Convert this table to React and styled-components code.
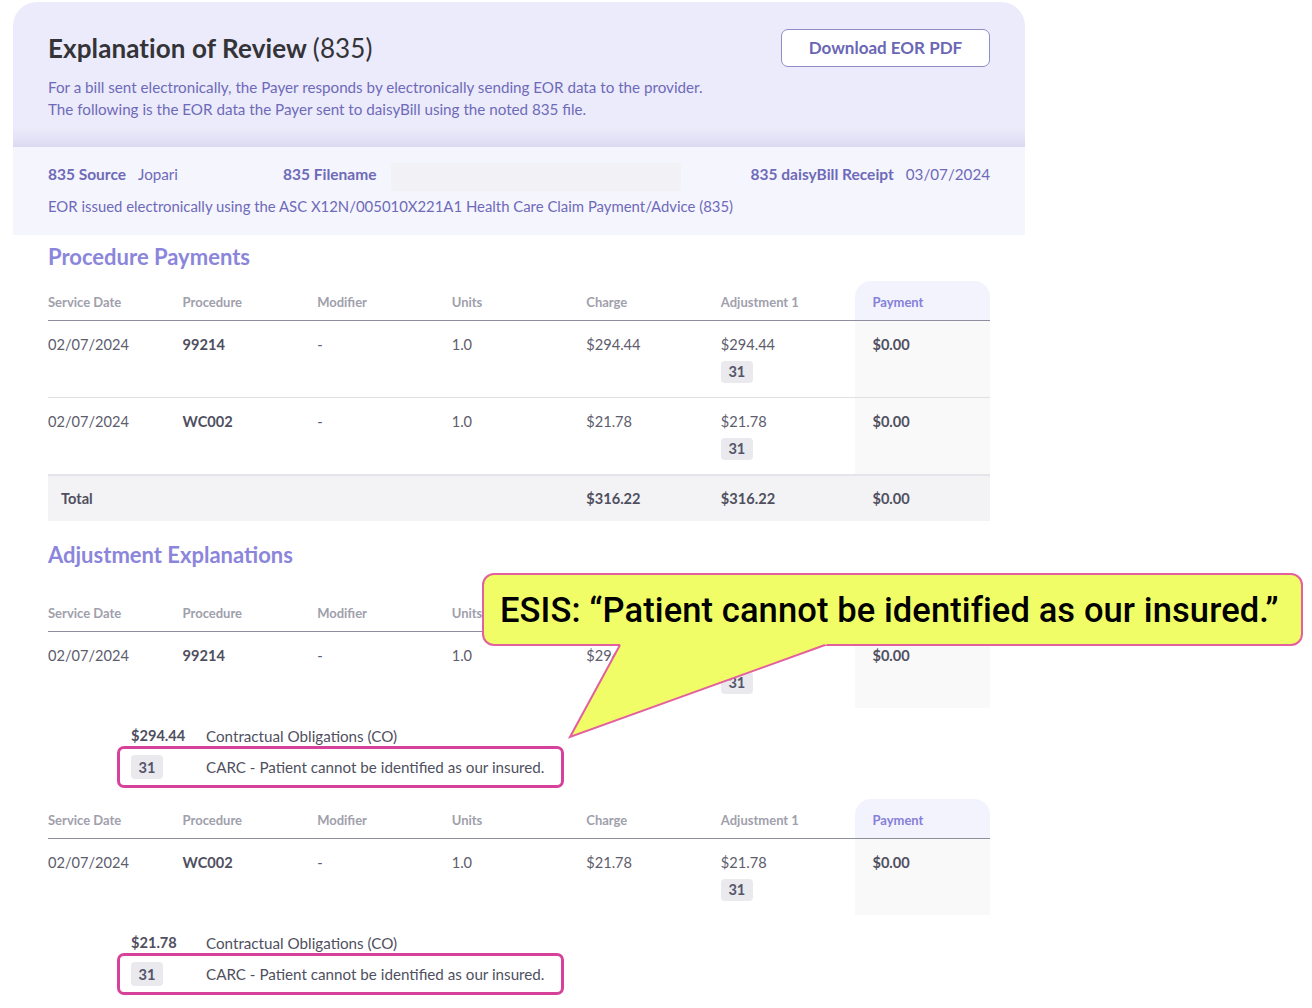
import React from 'react';
import styled, { createGlobalStyle } from 'styled-components';

const Global = createGlobalStyle`
  html, body { margin: 0; padding: 0; background: #fff; }
  body { font-family: Lato, "Noto Sans", sans-serif; color: #5b5b6b; -webkit-font-smoothing: antialiased; }
  * { box-sizing: border-box; }
`;

const Page = styled.div`
  position: relative;
  width: 1312px;
  height: 1008px;
  padding: 2px 0 0 13px;
  overflow: hidden;
  background: #fff;
`;

const Card = styled.div`
  width: 1012px;
  border-radius: 24px 24px 0 0;
  overflow: hidden;
  background: #fff;
`;

const Header = styled.header`
  height: 145px;
  padding: 26px 35px 0;
  background: linear-gradient(to bottom, #ecebfb 0, #ecebfb 126px, #e4e3f7 136px, #dad9ef 145px);
`;

const TitleRow = styled.div`
  display: flex;
  justify-content: space-between;
  align-items: center;
  height: 39px;
`;

const Title = styled.h1`
  margin: 0;
  font-size: 26px;
  font-weight: 700;
  color: #333338;
  letter-spacing: 0.1px;
  span { font-weight: 400; }
`;

const Button = styled.button`
  width: 209px;
  height: 38px;
  border: 1px solid #908cca;
  border-radius: 7px;
  background: #fff;
  color: #6b67b5;
  font-family: inherit;
  font-size: 17px;
  font-weight: 700;
  cursor: pointer;
`;

const Desc = styled.p`
  margin: 9px 0 0;
  font-size: 15.2px;
  line-height: 22px;
  color: #6e6ab8;
`;

const Meta = styled.section`
  height: 88px;
  padding: 16px 35px 0;
  background: #f5f5fe;
  color: #6e6ab8;
  font-size: 15.2px;
`;

const MetaRow = styled.div`
  display: flex;
  align-items: flex-start;
  height: 28px;
  line-height: 22px;
`;

const MetaItem = styled.div`
  display: flex;
  align-items: flex-start;
  width: ${p => p.$width || 'auto'};
  margin-left: ${p => (p.$right ? 'auto' : '0')};
`;

const MetaLabel = styled.span`
  font-weight: 700;
  font-size: 15.5px;
`;

const MetaValue = styled.span`
  margin-left: 12px;
`;

const FileBox = styled.div`
  width: 290px;
  height: 28px;
  margin-left: 15px;
  background: #f2f2f6;
  border-radius: 2px;
`;

const MetaNote = styled.div`
  margin-top: 5px;
  line-height: 20px;
  font-size: 14.9px;
`;

const Body = styled.div`
  padding: 0 35px;
`;

const SectionTitle = styled.h2`
  margin: ${p => p.$top}px 0 0;
  font-size: 22px;
  line-height: 24px;
  font-weight: 700;
  color: #8b86db;
`;

const Table = styled.div`
  margin-top: ${p => p.$top || 0}px;
  font-size: 14.6px;
`;

const Row = styled.div`
  display: grid;
  grid-template-columns: repeat(7, 1fr);
  border-top: ${p => (p.$total ? '2px solid #e4e4ea' : p.$first ? '0' : '1px solid #dfdfe4')};
  background: ${p => (p.$total ? '#f3f3f5' : 'transparent')};
`;

const HeadRow = styled(Row)`
  border-top: 0;
  border-bottom: 1px solid #8e8e9e;
`;

const HeadCell = styled.div`
  padding: 13px 0 10px ${p => (p.$pay ? '17px' : '0')};
  line-height: 16px;
  font-size: 13px;
  font-weight: 700;
  color: ${p => (p.$pay ? '#8580d8' : '#a0a0ac')};
  background: ${p => (p.$pay ? '#f3f3fe' : 'transparent')};
  border-radius: ${p => (p.$pay ? '16px 16px 0 0' : '0')};
`;

const Cell = styled.div`
  padding: ${p => (p.$total ? '13px 0 12px' : '14px 0 14px')};
  padding-left: ${p => (p.$pay ? '17px' : p.$indent ? '13px' : '0')};
  line-height: 20px;
  min-height: ${p => (p.$total ? '45px' : '76px')};
  font-weight: ${p => (p.$bold ? 700 : 400)};
  color: ${p => (p.$bold ? '#4f4f60' : '#5d5d6d')};
  background: ${p => (p.$pay && !p.$total ? '#f9f9fa' : 'transparent')};
`;

const Badge = styled.span`
  display: inline-flex;
  align-items: center;
  justify-content: center;
  width: 32px;
  height: ${p => p.$h || 22}px;
  margin-top: ${p => (p.$inline ? 0 : 6)}px;
  background: #e9e9ee;
  border-radius: 4px;
  font-size: 14.6px;
  font-weight: 700;
  color: #55556a;
`;

const AdjValue = styled.div`
  display: flex;
  flex-direction: column;
  align-items: flex-start;
`;

const ExplainLine = styled.div`
  display: flex;
  margin-left: 83px;
  padding-top: 18px;
  line-height: 20px;
  font-size: 15.2px;
  color: #4f4f60;
`;

const Amount = styled.span`
  width: 75px;
  font-weight: 700;
  font-size: 14.6px;
`;

const CarcBox = styled.div`
  display: flex;
  align-items: center;
  width: 447px;
  height: 42px;
  margin: 0 0 11px 69px;
  padding-left: 11px;
  border: 3px solid #d6419a;
  border-radius: 7px;
  font-size: 15.2px;
  color: #4f4f60;
`;

const CarcText = styled.span`
  margin-left: 43px;
`;

const Callout = styled.div`
  position: absolute;
  left: 482px;
  top: 573px;
  width: 821px;
  height: 73px;
  display: flex;
  align-items: center;
  padding-left: 16px;
  background: #f1fd66;
  border: 2px solid #e2609e;
  border-radius: 12px;
  font-family: Roboto, "Liberation Sans", sans-serif;
  font-weight: 500;
  font-size: 34.5px;
  letter-spacing: 0.1px;
  color: #000;
  white-space: nowrap;
`;

const Tail = styled.svg`
  position: absolute;
  left: 560px;
  top: 640px;
  width: 280px;
  height: 104px;
  overflow: visible;
`;

const headers = ['Service Date', 'Procedure', 'Modifier', 'Units', 'Charge', 'Adjustment 1', 'Payment'];

function TableHead() {
  return (
    <HeadRow>
      {headers.map((h, i) => (
        <HeadCell key={h} $pay={i === 6}>{h}</HeadCell>
      ))}
    </HeadRow>
  );
}

function DataRow({ line, first }) {
  return (
    <Row $first={first}>
      <Cell>{line.date}</Cell>
      <Cell $bold>{line.code}</Cell>
      <Cell>-</Cell>
      <Cell>{line.units}</Cell>
      <Cell>{line.charge}</Cell>
      <Cell>
        <AdjValue>
          {line.adj}
          <Badge>31</Badge>
        </AdjValue>
      </Cell>
      <Cell $pay $bold>{line.pay}</Cell>
    </Row>
  );
}

const lines = [
  { date: '02/07/2024', code: '99214', units: '1.0', charge: '$294.44', adj: '$294.44', pay: '$0.00' },
  { date: '02/07/2024', code: 'WC002', units: '1.0', charge: '$21.78', adj: '$21.78', pay: '$0.00' },
];

function Explanation({ line }) {
  return (
    <>
      <Table>
        <TableHead />
        <DataRow line={line} first />
      </Table>
      <ExplainLine>
        <Amount>{line.adj}</Amount>
        <span>Contractual Obligations (CO)</span>
      </ExplainLine>
      <CarcBox>
        <Badge $inline $h={24}>31</Badge>
        <CarcText>CARC - Patient cannot be identified as our insured.</CarcText>
      </CarcBox>
    </>
  );
}

export default function App() {
  return (
    <Page>
      <Global />
      <Card>
        <Header>
          <TitleRow>
            <Title>Explanation of Review <span>(835)</span></Title>
            <Button>Download EOR PDF</Button>
          </TitleRow>
          <Desc>
            For a bill sent electronically, the Payer responds by electronically sending EOR data to the provider.
            <br />
            The following is the EOR data the Payer sent to daisyBill using the noted 835 file.
          </Desc>
        </Header>
        <Meta>
          <MetaRow>
            <MetaItem $width="235px">
              <MetaLabel>835 Source</MetaLabel>
              <MetaValue>Jopari</MetaValue>
            </MetaItem>
            <MetaItem>
              <MetaLabel>835 Filename</MetaLabel>
              <FileBox />
            </MetaItem>
            <MetaItem $right>
              <MetaLabel>835 daisyBill Receipt</MetaLabel>
              <MetaValue>03/07/2024</MetaValue>
            </MetaItem>
          </MetaRow>
          <MetaNote>
            EOR issued electronically using the ASC X12N/005010X221A1 Health Care Claim Payment/Advice (835)
          </MetaNote>
        </Meta>
        <Body>
          <SectionTitle $top={10}>Procedure Payments</SectionTitle>
          <Table $top={12}>
            <TableHead />
            {lines.map((l, i) => (
              <DataRow key={l.code} line={l} first={i === 0} />
            ))}
            <Row $total>
              <Cell $total $bold $indent>Total</Cell>
              <Cell $total />
              <Cell $total />
              <Cell $total />
              <Cell $total $bold>$316.22</Cell>
              <Cell $total $bold>$316.22</Cell>
              <Cell $total $pay $bold>$0.00</Cell>
            </Row>
          </Table>
          <SectionTitle $top={22}>Adjustment Explanations</SectionTitle>
          <Table $top={25}>
            <Explanation line={lines[0]} />
            <Explanation line={lines[1]} />
          </Table>
        </Body>
      </Card>
      <Callout>ESIS: “Patient cannot be identified as our insured.”</Callout>
      <Tail viewBox="0 0 280 104">
        <polygon points="62,1 10,97 276,1" fill="#f1fd66" />
        <polyline points="60,5 10,97 265,5" fill="none" stroke="#e2609e" strokeWidth="2" strokeLinejoin="miter" />
      </Tail>
    </Page>
  );
}
